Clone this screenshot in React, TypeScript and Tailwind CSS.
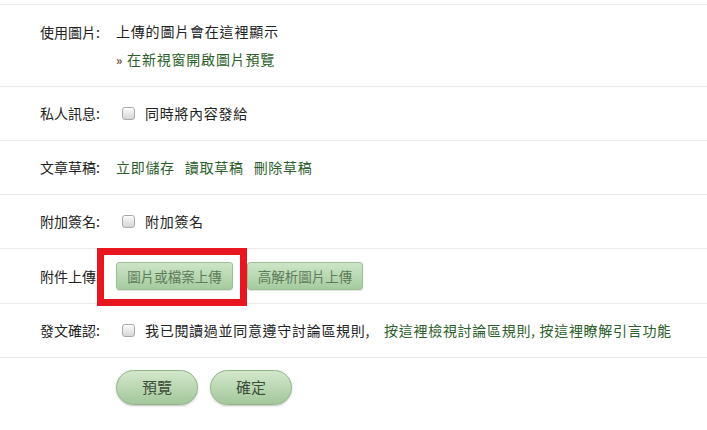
import React from "react";

function Checkbox() {
  return (
    <span className="ml-[6px] mr-[10px] inline-block h-[13px] w-[13px] shrink-0 rounded-[3px] border border-[#a9a9a9] bg-gradient-to-b from-[#fbfbfb] to-[#d6d6d6] shadow-[inset_0_1px_0_#fff]" />
  );
}

function Row({
  label,
  className,
  children,
}: {
  label: string;
  className?: string;
  children: React.ReactNode;
}) {
  return (
    <div
      className={`flex items-center border-t border-[#e9e9e9] pl-[40px] ${className ?? "h-[54px]"}`}
    >
      <div className="w-[76px] shrink-0">{label}</div>
      <div className="flex items-center tracking-[0.7px]">{children}</div>
    </div>
  );
}

function UploadButton({ children, w }: { children: React.ReactNode; w: string }) {
  return (
    <button
      className={`${w} h-[28px] rounded-[3px] border border-[#9dbf96] bg-gradient-to-b from-[#cde5c7] to-[#a6cb9f] text-[13.5px] tracking-normal text-[#5d7a59] shadow-[0_1px_1px_rgba(0,0,0,0.12)]`}
    >
      {children}
    </button>
  );
}

function PillButton({ children }: { children: React.ReactNode }) {
  return (
    <button className="h-[35px] w-[82px] rounded-full border border-[#92b38a] bg-gradient-to-b from-[#d3e8cc] to-[#a3c79b] text-[15px] text-[#3c4d3a] shadow-[0_1px_2px_rgba(0,0,0,0.25)]">
      {children}
    </button>
  );
}

export default function App() {
  const link = "text-[#2c5e2b]";
  return (
    <div
      className="h-[430px] w-[707px] overflow-hidden bg-white pt-[4px] text-[14px] text-[#222]"
      style={{ fontFamily: '"Noto Sans CJK TC", "Noto Sans", sans-serif' }}
    >
      <div className="flex h-[82px] items-center border-t border-[#e9e9e9] pl-[40px]">
        <div className="w-[76px] shrink-0 self-start pt-[13px] leading-[28px]">使用圖片:</div>
        <div className="flex flex-col leading-[28px] tracking-[0.8px]">
          <span>上傳的圖片會在這裡顯示</span>
          <span className={link}>
            <span className="font-bold text-[12px] text-[#6b4a3a]">»</span> 在新視窗開啟圖片預覽
          </span>
        </div>
      </div>

      <Row label="私人訊息:">
        <Checkbox />
        <span>同時將內容發給</span>
      </Row>

      <Row label="文章草稿:">
        <div className={`flex gap-[10px] ${link}`}>
          <a>立即儲存</a>
          <a>讀取草稿</a>
          <a>刪除草稿</a>
        </div>
      </Row>

      <Row label="附加簽名:">
        <Checkbox />
        <span>附加簽名</span>
      </Row>

      <div className="relative">
        <Row label="附件上傳:" className="h-[55px]">
          <div className="flex gap-[14px]">
            <UploadButton w="w-[117px]">圖片或檔案上傳</UploadButton>
            <UploadButton w="w-[116px]">高解析圖片上傳</UploadButton>
          </div>
        </Row>
        <div className="pointer-events-none absolute left-[97px] top-0 h-[58px] w-[150px] border-[7px] border-[#e8161f]" />
      </div>

      <Row label="發文確認:">
        <Checkbox />
        <span>我已閱讀過並同意遵守討論區規則,</span>
        <span className={`ml-[14px] ${link}`}>按這裡檢視討論區規則, 按這裡瞭解引言功能</span>
      </Row>

      <div className="flex gap-[12px] border-t border-[#e9e9e9] pl-[116px] pt-[12px]">
        <PillButton>預覽</PillButton>
        <PillButton>確定</PillButton>
      </div>
    </div>
  );
}
